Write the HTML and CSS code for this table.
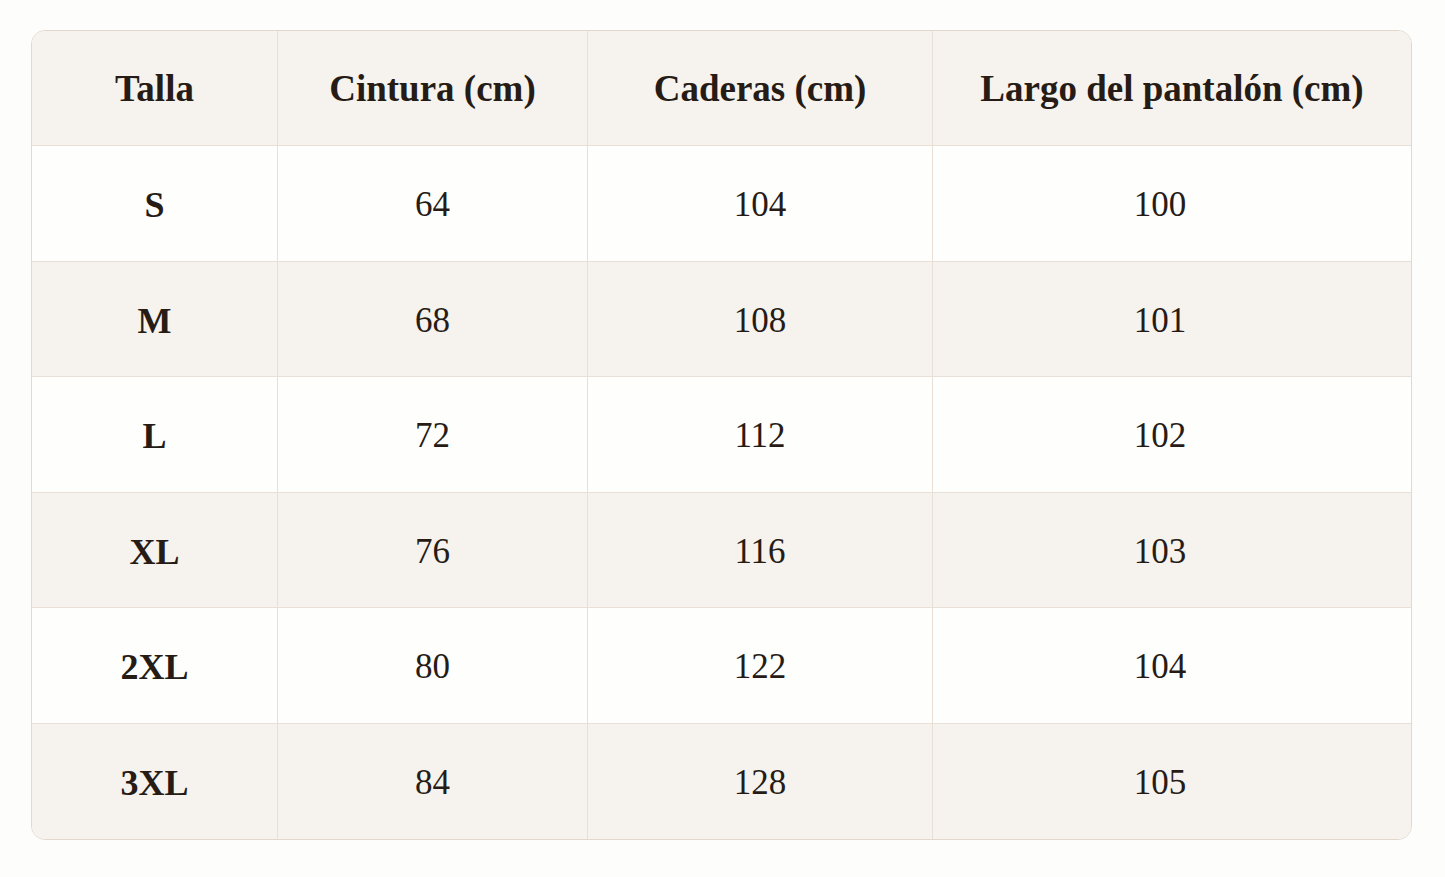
FILE: index.html
```html
<!DOCTYPE html>
<html lang="es">
<head>
<meta charset="utf-8">
<title>Guía de tallas</title>
<link rel="stylesheet" href="styles.css">
</head>
<body>
<div class="wrap">
  <table class="sizes">
    <colgroup>
      <col class="c1"><col class="c2"><col class="c3"><col class="c4">
    </colgroup>
    <thead>
      <tr><th>Talla</th><th>Cintura (cm)</th><th>Caderas (cm)</th><th>Largo del pantalón (cm)</th></tr>
    </thead>
    <tbody>
      <tr><th>S</th><td>64</td><td>104</td><td>100</td></tr>
      <tr class="alt"><th>M</th><td>68</td><td>108</td><td>101</td></tr>
      <tr><th>L</th><td>72</td><td>112</td><td>102</td></tr>
      <tr class="alt"><th>XL</th><td>76</td><td>116</td><td>103</td></tr>
      <tr><th>2XL</th><td>80</td><td>122</td><td>104</td></tr>
      <tr class="alt"><th>3XL</th><td>84</td><td>128</td><td>105</td></tr>
    </tbody>
  </table>
</div>
</body>
</html>
```
FILE: styles.css
```css
html, body {
  margin: 0;
  padding: 0;
  background: #fdfdfc;
}
body {
  font-family: "Liberation Serif", "Times New Roman", serif;
  color: #261c15;
}
.wrap {
  padding: 30px 33px 0 31px;
}
.sizes {
  width: 1381px;
  height: 810px;
  table-layout: fixed;
  border-collapse: separate;
  border-spacing: 0;
  border: 1px solid #e2d8ce;
  border-radius: 14px;
  overflow: hidden;
  background: #fefefd;
}
.c1 { width: 246px; }
.c2 { width: 310px; }
.c3 { width: 345px; }
.c4 { width: auto; }
.sizes th, .sizes td {
  text-align: center;
  vertical-align: middle;
  border-right: 1px solid #e8e0d7;
  border-bottom: 1px solid #e8e0d7;
  padding: 0;
}
.sizes tr > :last-child { border-right: none; }
.sizes tbody tr:last-child > * { border-bottom: none; }
.sizes thead th {
  background: #f6f3ef;
  font-size: 37px;
  font-weight: bold;
  height: 114px;
}
.sizes tbody th {
  font-size: 36px;
  font-weight: bold;
  padding-top: 4px;
}
.sizes td {
  font-size: 35px;
  font-weight: normal;
  padding-top: 4px;
}
.sizes tbody td:last-child { padding-right: 24px; }
.sizes tbody tr { height: 115px; }
.sizes tr.alt > * { background: #f6f3ef; }
```
